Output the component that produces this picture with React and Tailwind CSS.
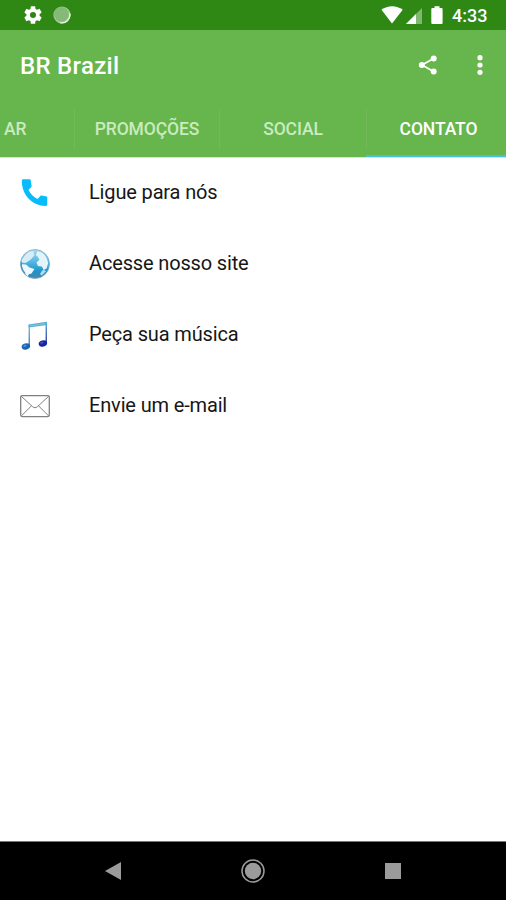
import React from 'react';

const GearIcon = () => (
  <svg className="w-[22px] h-[22px]" viewBox="0 0 24 24" fill="#fff">
    <path d="M19.14 12.94c.04-.3.06-.61.06-.94 0-.32-.02-.64-.07-.94l2.03-1.58a.49.49 0 0 0 .12-.61l-1.92-3.32a.49.49 0 0 0-.59-.22l-2.39.96c-.5-.38-1.03-.7-1.62-.94l-.36-2.54a.48.48 0 0 0-.48-.41h-3.84a.48.48 0 0 0-.47.41l-.36 2.54c-.59.24-1.13.57-1.62.94l-2.39-.96a.48.48 0 0 0-.59.22L2.74 8.87a.48.48 0 0 0 .12.61l2.03 1.58c-.05.3-.09.63-.09.94s.02.64.07.94l-2.03 1.58a.49.49 0 0 0-.12.61l1.92 3.32c.12.22.37.29.59.22l2.39-.96c.5.38 1.03.7 1.62.94l.36 2.54c.05.24.24.41.48.41h3.84c.24 0 .44-.17.47-.41l.36-2.54c.59-.24 1.13-.56 1.62-.94l2.39.96c.22.08.47 0 .59-.22l1.92-3.32a.48.48 0 0 0-.12-.61l-2.01-1.58zM12 15.3A3.3 3.3 0 1 1 12 8.7a3.3 3.3 0 0 1 0 6.6z" />
  </svg>
);

const SyncDot = () => (
  <svg className="w-[18px] h-[18px]" viewBox="0 0 18 18">
    <circle cx="9" cy="9" r="8.6" fill="#a3cf98" />
    <circle cx="8.4" cy="8.3" r="7.4" fill="#85b978" />
    <path d="M16.8 7.5A8 8 0 0 1 7 16.6" fill="none" stroke="#e4f3df" strokeWidth="1.4" />
  </svg>
);

const StatusIcons = () => (
  <svg className="w-[64px] h-[20px]" viewBox="0 0 64 20">
    <path d="M0.500 4.700C6.600 0 15.600 0 21.700 4.700L11 18.600z" fill="#fff" />
    <path d="M25 19L41 3v16z" fill="#fff" fillOpacity=".4" />
    <path d="M25 19L35 9v10z" fill="#fff" />
    <path d="M53.500 3V1.200h5V3h1.900c.7 0 1.200.5 1.200 1.200v13.600c0 .8-.5 1.300-1.200 1.300h-8.800c-.8 0-1.300-.5-1.300-1.300V4.200c0-.7.5-1.200 1.300-1.200z" fill="#fff" />
  </svg>
);

const ShareIcon = () => (
  <svg className="w-5 h-5" viewBox="0 0 20 20" fill="#fff">
    <path d="M15.500 3.500L4 10l11.500 6.500" fill="none" stroke="#fff" strokeWidth="1.700" />
    <circle cx="15.700" cy="3.500" r="3" />
    <circle cx="3.800" cy="10" r="3" />
    <circle cx="15.700" cy="16.500" r="3" />
  </svg>
);

const MoreIcon = () => (
  <svg className="w-[6px] h-5" viewBox="0 0 6 20" fill="#fff">
    <circle cx="3" cy="2.700" r="2.600" />
    <circle cx="3" cy="10" r="2.600" />
    <circle cx="3" cy="17.300" r="2.600" />
  </svg>
);

const PhoneIcon = () => (
  <svg className="w-[30px] h-[30px]" viewBox="0 0 30 30">
    <path d="M3.300 1.200h6.200c.8 0 1.300.6 1.300 1.400 0 1.800.3 3.400.8 5 .2.500 0 1.100-.3 1.500L8.500 12c2 3.900 5 6.900 9 8.900l2.900-2.900c.4-.4 1-.5 1.500-.4 1.500.5 3.100.8 4.700.8.600 0 .7.500.7 1.300v6.900c0 .8-.7 1.300-1.500 1.300C12.300 27.900 1.800 17 1.800 2.700c0-.9.6-1.500 1.500-1.500z" fill="#08bcfb" />
  </svg>
);

const GlobeIcon = () => (
  <svg className="w-[30px] h-[30px]" viewBox="0 0 30 30">
    <defs>
      <linearGradient id="sea" x1="0" y1="0" x2="0" y2="1">
        <stop offset="0" stopColor="#a9d9ee" />
        <stop offset=".45" stopColor="#52b5df" />
        <stop offset=".75" stopColor="#1c94c9" />
        <stop offset="1" stopColor="#4d86ad" />
      </linearGradient>
    </defs>
    <circle cx="15" cy="15" r="14.500" fill="url(#sea)" stroke="#86a9c2" strokeWidth=".8" />
    <path d="M4.500 7C7 3.500 10 2 13.500 1.800l.8 4.700-3.800 4.300-5 3.200-4.300-.5C1.500 11 2.800 9 4.500 7z" fill="#d5edf7" />
    <path d="M17.500 2l5 2c3.200 2.500 5.200 6 5.600 10.500l-1.600 5-2.700 1.500-2-3.500-3.800-.5-1.500-3.500 3-2.700-1.700-3-2-1.800z" fill="#e4f4fb" />
    <path d="M1.800 15.200l4.200.3 3.500 3 5 1.500-3 4.500-2.700.8-.9 1.900C4.500 24.800 2 20.500 1.800 15.200z" fill="#f0f8fc" />
    <path d="M23.500 20.500l2.500 1.700-4 4-2-.7 1.200-2.700z" fill="#b8dbec" />
    <path d="M1.200 12.500C.8 17 2 21 5 24.300" fill="none" stroke="#4b91bd" strokeWidth="1.100" />
  </svg>
);

const MusicIcon = () => (
  <svg className="w-[30px] h-[30px]" viewBox="0 -1 30 30">
    <defs>
      <linearGradient id="stemA" x1="0" y1="0" x2="0" y2="1">
        <stop offset="0" stopColor="#6cc0df" />
        <stop offset="1" stopColor="#2b6db9" />
      </linearGradient>
      <linearGradient id="stemB" x1="0" y1="0" x2="0" y2="1">
        <stop offset="0" stopColor="#4ba6d3" />
        <stop offset="1" stopColor="#20249d" />
      </linearGradient>
    </defs>
    <path d="M8.600 3.700h1.300v22H8.600z" fill="url(#stemA)" />
    <path d="M25.600 1h1.300v22h-1.300z" fill="url(#stemB)" />
    <path d="M8.600 3.400L26.900.8v3.100L8.600 6.500z" fill="#54abc8" />
    <path d="M9.900 4.800l15.700-2.200" stroke="#8ad4e7" strokeWidth=".8" />
    <ellipse cx="5.900" cy="25.500" rx="4.300" ry="3.100" fill="#1c62b5" transform="rotate(-18 5.900 25.500)" />
    <ellipse cx="4.900" cy="24.700" rx="1.700" ry="1" fill="#4c9bd8" transform="rotate(-18 4.900 24.700)" />
    <ellipse cx="22.900" cy="22.500" rx="4.300" ry="3.100" fill="#1a25a3" transform="rotate(-18 22.900 22.500)" />
    <ellipse cx="21.900" cy="21.700" rx="1.600" ry=".9" fill="#4458c4" transform="rotate(-18 21.900 21.700)" />
  </svg>
);

const MailIcon = () => (
  <svg className="w-[30px] h-[30px]" viewBox="0 0 30 30" fill="none" stroke="#808080">
    <rect x=".7" y="4.600" width="28.600" height="21" rx="1.500" strokeWidth="1.300" />
    <path d="M1.200 5.200l11.500 10.600c1.400 1.200 3.200 1.200 4.600 0L28.800 5.200M1.200 25.100l10.300-10.300M28.800 25.100L18.500 14.800" strokeWidth="1" />
  </svg>
);

const contacts = [
  { label: 'Ligue para nós', icon: PhoneIcon },
  { label: 'Acesse nosso site', icon: GlobeIcon },
  { label: 'Peça sua música', icon: MusicIcon },
  { label: 'Envie um e-mail', icon: MailIcon },
];

const Divider = () => <span className="w-px h-10 mt-2 bg-[#72b95a]" />;

const App = () => {
  return (
    <div className="w-[506px] h-[900px] flex flex-col bg-white overflow-hidden font-['Roboto',sans-serif]">
      {/* Status bar */}
      <div className="h-[30px] shrink-0 bg-[#2f8814] flex items-center pl-[22px] pr-[19px]">
        <GearIcon />
        <div className="ml-[9px]"><SyncDot /></div>
        <div className="ml-auto"><StatusIcons /></div>
        <span className="ml-[7px] pt-0.5 w-[35px] text-[18px] leading-none font-medium text-white whitespace-nowrap">4:33</span>
      </div>

      {/* Toolbar */}
      <header className="h-[71px] shrink-0 bg-[#67b54d] flex items-center pl-5 pr-[23px]">
        <h1 className="text-[24px] leading-none tracking-[0.3px] font-medium text-white">BR Brazil</h1>
        <div className="ml-auto -mt-0.5 flex items-center gap-[39px]">
          <ShareIcon />
          <MoreIcon />
        </div>
      </header>

      {/* Tabs */}
      <nav className="h-14 shrink-0 bg-[#67b54d] flex text-[17.5px] tracking-[-0.1px] font-medium text-[#caebbf] whitespace-nowrap">
        <div className="w-[74px] flex items-center pl-1">AR</div>
        <Divider />
        <div className="w-[144px] flex items-center justify-center">PROMOÇÕES</div>
        <Divider />
        <div className="w-[146px] flex items-center justify-center">SOCIAL</div>
        <div className="flex-1 flex border-b-2 border-[#45c0e0] text-white">
          <Divider />
          <div className="flex-1 flex items-center justify-center pl-1 pt-0.5">CONTATO</div>
        </div>
      </nav>

      {/* Contact options */}
      <ul className="flex-1 border-t border-[#d3e9cb]">
        {contacts.map(({ label, icon: Icon }) => (
          <li key={label} className="h-[71px] flex items-center pl-5 pb-[3px]">
            <div className="pt-px"><Icon /></div>
            <span className="ml-[39px] text-[20px] leading-none tracking-[-0.15px] text-[#161616]">{label}</span>
          </li>
        ))}
      </ul>

      {/* System navigation */}
      <footer className="h-[59px] shrink-0 bg-black border-t border-[#777] flex items-center justify-between pl-[105px] pr-[105px]">
        <svg className="w-4 h-[18px]" viewBox="0 0 16 18"><path d="M0 9L16 0v18z" fill="#9b9b9b" /></svg>
        <svg className="w-6 h-6" viewBox="0 0 24 24">
          <circle cx="12" cy="12" r="11" fill="none" stroke="#9b9b9b" strokeWidth="1.500" />
          <circle cx="12" cy="12" r="8.200" fill="#9b9b9b" />
        </svg>
        <span className="w-4 h-4 bg-[#9b9b9b]" />
      </footer>
    </div>
  );
};

export default App;
